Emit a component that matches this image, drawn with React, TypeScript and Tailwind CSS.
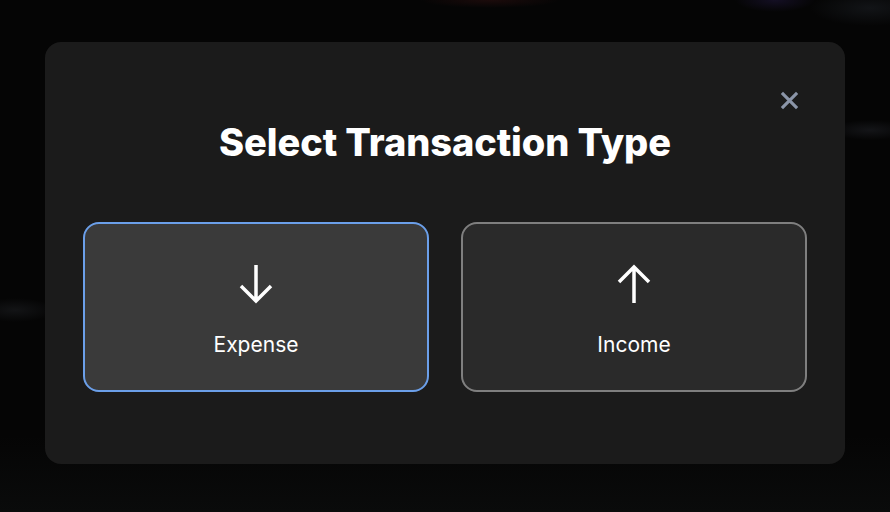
import React, { useState } from 'react';

type TxType = 'expense' | 'income';

const ArrowIcon: React.FC<{ dir: 'up' | 'down' }> = ({ dir }) => (
  <svg viewBox="0 0 40 40" fill="none" stroke="currentColor" strokeWidth={3.5} className="w-10 h-10 text-white">
    {dir === 'down' ? (
      <path d="M20 1v36M5 22l15 15 15-15" />
    ) : (
      <path d="M20 39V3M5 18 20 3l15 15" />
    )}
  </svg>
);

const App: React.FC = () => {
  const [selected, setSelected] = useState<TxType>('expense');

  const options: { id: TxType; label: string; dir: 'up' | 'down' }[] = [
    { id: 'expense', label: 'Expense', dir: 'down' },
    { id: 'income', label: 'Income', dir: 'up' },
  ];

  return (
    <div
      className="min-h-screen w-full flex justify-center pt-[42px] pb-[48px] bg-[radial-gradient(ellipse_70px_8px_at_490px_0px,#1c0b0b,transparent),radial-gradient(ellipse_40px_12px_at_775px_0px,#140f24,transparent),radial-gradient(ellipse_60px_18px_at_870px_8px,#121417,transparent),radial-gradient(ellipse_40px_12px_at_15px_310px,#131416,transparent),radial-gradient(ellipse_40px_10px_at_870px_130px,#141518,transparent),linear-gradient(#050505,#050505_85%,#0a0b0b)]"
      style={{ fontFamily: 'Inter, "Noto Sans", sans-serif' }}
    >
      <div className="relative w-[800px] rounded-2xl bg-[#1b1b1b] px-[38px] pt-[80px] pb-[72px]">
        <button className="absolute right-[46px] top-[49px] text-[#8b95a8] hover:text-white">
          <svg viewBox="0 0 20 20" className="w-[19px] h-[19px]" fill="none" stroke="currentColor" strokeWidth={3.3}>
            <path d="M2 2 18 18M18 2 2 18" />
          </svg>
        </button>

        <h2 className="text-center text-white text-[38px] leading-10 font-extrabold tracking-[-0.1px]">
          Select Transaction Type
        </h2>

        <div className="mt-[60px] grid grid-cols-2 gap-8">
          {options.map((opt) => {
            const active = selected === opt.id;
            return (
              <button
                key={opt.id}
                onClick={() => setSelected(opt.id)}
                className={
                  active
                    ? 'h-[170px] rounded-2xl border-2 border-[#6b9fe9] bg-[#3a3a3a] flex flex-col items-center justify-center gap-[27px] pt-[9px]'
                    : 'h-[170px] rounded-2xl border-2 border-[#7f7f7f] bg-[#2a2a2a] flex flex-col items-center justify-center gap-[27px] pt-[9px]'
                }
              >
                <ArrowIcon dir={opt.dir} />
                <span className="text-white text-[21px] leading-7 font-normal">{opt.label}</span>
              </button>
            );
          })}
        </div>
      </div>
    </div>
  );
};

export default App;
